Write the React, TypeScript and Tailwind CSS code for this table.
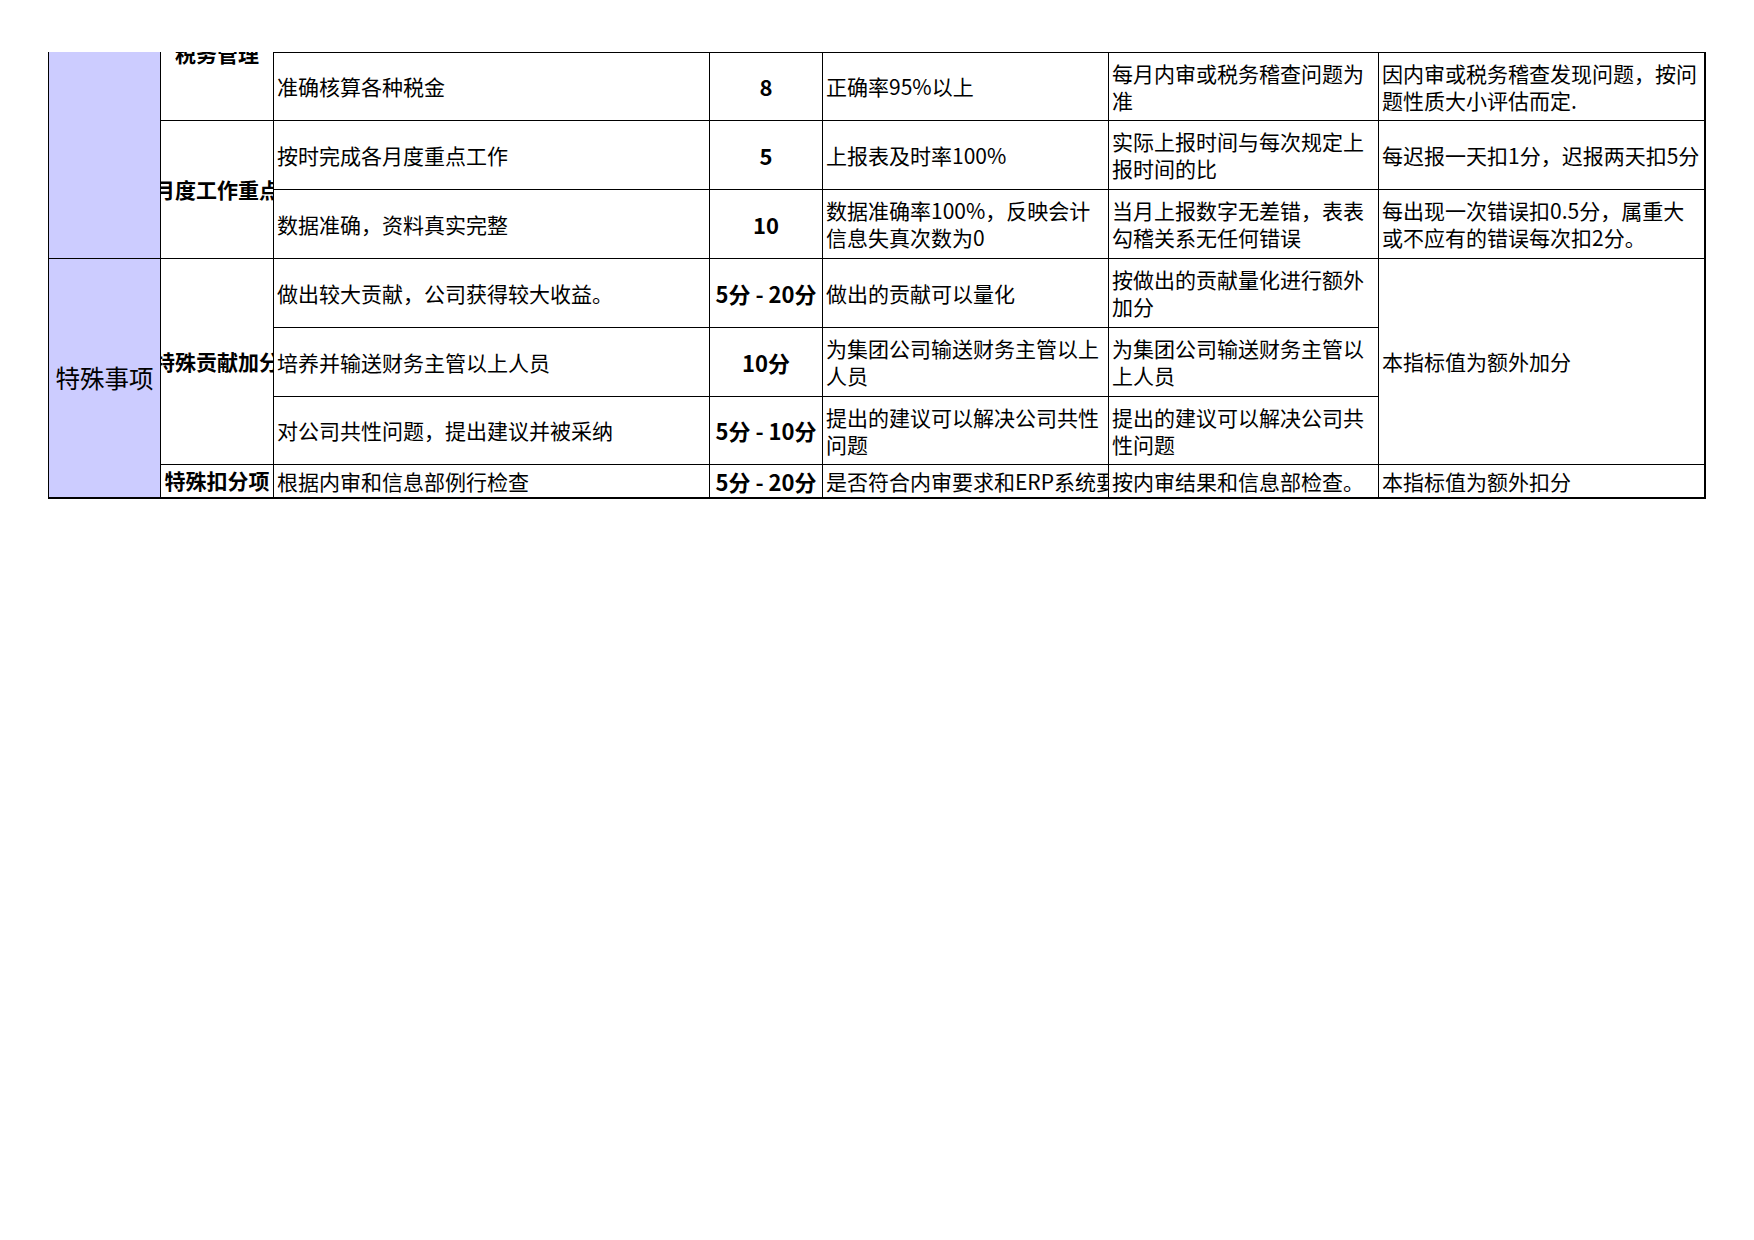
import React from "react";

const F = { fontFamily: '"Noto Sans CJK SC", "Noto Sans", sans-serif' };

type CellProps = {
  cls: string;
  children?: React.ReactNode;
};

function Cell({ cls, children }: CellProps) {
  return (
    <div className={"border-r border-b border-black overflow-hidden flex items-center " + cls}>
      {children}
    </div>
  );
}

function L({ lines }: { lines: string[] }) {
  return (
    <div className="pl-[3px] leading-[27px] whitespace-nowrap">
      {lines.map((l, i) => (
        <div key={i}>{l}</div>
      ))}
    </div>
  );
}

function B({ t }: { t: string }) {
  return <span className="font-bold whitespace-nowrap shrink-0 text-[21px]">{t}</span>;
}

function N({ t }: { t: string }) {
  return <span className="font-bold whitespace-nowrap shrink-0 text-[22px]">{t}</span>;
}

export default function App() {
  return (
    <div className="min-h-[1240px] w-[1754px] bg-white text-black text-[21px]" style={F}>
      <div className="pt-[52px] pl-[48px]">
        <div className="flex">
          <div className="w-px bg-black self-stretch" />
          <div className="grid grid-cols-[112px_113px_436px_113px_286px_270px_327px] grid-rows-[69px_69px_69px_69px_69px_68px_34px]">
            {/* column 1 */}
            <Cell cls="col-start-1 row-start-1 row-span-3 bg-[#ccccff]" />
            <Cell cls="col-start-1 row-start-4 row-span-4 bg-[#ccccff] justify-center border-b-2">
              <span className="text-[24.5px] whitespace-nowrap">特殊事项</span>
            </Cell>

            {/* column 2 */}
            <Cell cls="col-start-2 row-start-1 justify-center !items-start">
              <span className="font-bold whitespace-nowrap shrink-0 leading-[27px] -mt-[12px]">税务管理</span>
            </Cell>
            <Cell cls="col-start-2 row-start-2 row-span-2 justify-center">
              <B t="月度工作重点" />
            </Cell>
            <Cell cls="col-start-2 row-start-4 row-span-3 justify-center">
              <B t="特殊贡献加分" />
            </Cell>
            <Cell cls="col-start-2 row-start-7 justify-center border-b-2">
              <B t="特殊扣分项" />
            </Cell>

            {/* row 1 */}
            <Cell cls="col-start-3 row-start-1 border-t">
              <L lines={["准确核算各种税金"]} />
            </Cell>
            <Cell cls="col-start-4 row-start-1 border-t justify-center">
              <N t="8" />
            </Cell>
            <Cell cls="col-start-5 row-start-1 border-t">
              <L lines={["正确率95%以上"]} />
            </Cell>
            <Cell cls="col-start-6 row-start-1 border-t">
              <L lines={["每月内审或税务稽查问题为", "准"]} />
            </Cell>
            <Cell cls="col-start-7 row-start-1 border-t border-r-2">
              <L lines={["因内审或税务稽查发现问题，按问", "题性质大小评估而定."]} />
            </Cell>

            {/* row 2 */}
            <Cell cls="col-start-3 row-start-2">
              <L lines={["按时完成各月度重点工作"]} />
            </Cell>
            <Cell cls="col-start-4 row-start-2 justify-center">
              <N t="5" />
            </Cell>
            <Cell cls="col-start-5 row-start-2">
              <L lines={["上报表及时率100%"]} />
            </Cell>
            <Cell cls="col-start-6 row-start-2">
              <L lines={["实际上报时间与每次规定上", "报时间的比"]} />
            </Cell>
            <Cell cls="col-start-7 row-start-2 border-r-2">
              <L lines={["每迟报一天扣1分，迟报两天扣5分"]} />
            </Cell>

            {/* row 3 */}
            <Cell cls="col-start-3 row-start-3">
              <L lines={["数据准确，资料真实完整"]} />
            </Cell>
            <Cell cls="col-start-4 row-start-3 justify-center">
              <N t="10" />
            </Cell>
            <Cell cls="col-start-5 row-start-3">
              <L lines={["数据准确率100%，反映会计", "信息失真次数为0"]} />
            </Cell>
            <Cell cls="col-start-6 row-start-3">
              <L lines={["当月上报数字无差错，表表", "勾稽关系无任何错误"]} />
            </Cell>
            <Cell cls="col-start-7 row-start-3 border-r-2">
              <L lines={["每出现一次错误扣0.5分，属重大", "或不应有的错误每次扣2分。"]} />
            </Cell>

            {/* row 4 */}
            <Cell cls="col-start-3 row-start-4">
              <L lines={["做出较大贡献，公司获得较大收益。"]} />
            </Cell>
            <Cell cls="col-start-4 row-start-4 justify-center">
              <N t="5分 - 20分" />
            </Cell>
            <Cell cls="col-start-5 row-start-4">
              <L lines={["做出的贡献可以量化"]} />
            </Cell>
            <Cell cls="col-start-6 row-start-4">
              <L lines={["按做出的贡献量化进行额外", "加分"]} />
            </Cell>
            <Cell cls="col-start-7 row-start-4 row-span-3 border-r-2">
              <L lines={["本指标值为额外加分"]} />
            </Cell>

            {/* row 5 */}
            <Cell cls="col-start-3 row-start-5">
              <L lines={["培养并输送财务主管以上人员"]} />
            </Cell>
            <Cell cls="col-start-4 row-start-5 justify-center">
              <N t="10分" />
            </Cell>
            <Cell cls="col-start-5 row-start-5">
              <L lines={["为集团公司输送财务主管以上", "人员"]} />
            </Cell>
            <Cell cls="col-start-6 row-start-5">
              <L lines={["为集团公司输送财务主管以", "上人员"]} />
            </Cell>

            {/* row 6 */}
            <Cell cls="col-start-3 row-start-6">
              <L lines={["对公司共性问题，提出建议并被采纳"]} />
            </Cell>
            <Cell cls="col-start-4 row-start-6 justify-center">
              <N t="5分 - 10分" />
            </Cell>
            <Cell cls="col-start-5 row-start-6">
              <L lines={["提出的建议可以解决公司共性", "问题"]} />
            </Cell>
            <Cell cls="col-start-6 row-start-6">
              <L lines={["提出的建议可以解决公司共", "性问题"]} />
            </Cell>

            {/* row 7 */}
            <Cell cls="col-start-3 row-start-7 border-b-2">
              <L lines={["根据内审和信息部例行检查"]} />
            </Cell>
            <Cell cls="col-start-4 row-start-7 justify-center border-b-2">
              <N t="5分 - 20分" />
            </Cell>
            <Cell cls="col-start-5 row-start-7 border-b-2">
              <L lines={["是否符合内审要求和ERP系统要"]} />
            </Cell>
            <Cell cls="col-start-6 row-start-7 border-b-2">
              <L lines={["按内审结果和信息部检查。"]} />
            </Cell>
            <Cell cls="col-start-7 row-start-7 border-b-2 border-r-2">
              <L lines={["本指标值为额外扣分"]} />
            </Cell>
          </div>
        </div>
      </div>
    </div>
  );
}
